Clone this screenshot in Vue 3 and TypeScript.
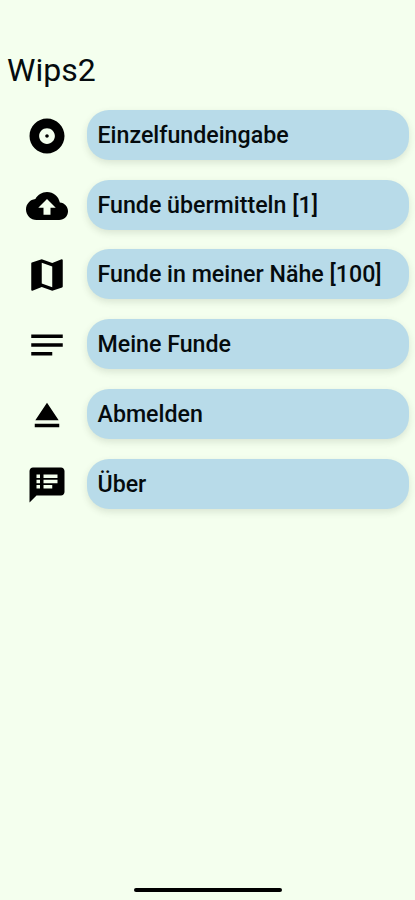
<script setup lang="ts">
interface MenuItem {
  label: string
  icon: string
}

const items: MenuItem[] = [
  {
    label: 'Einzelfundeingabe',
    icon: 'M12 2C6.48 2 2 6.48 2 12s4.480 10 10 10 10-4.480 10-10S17.520 2 12 2zm0 14.500c-2.490 0-4.500-2.010-4.500-4.500S9.510 7.500 12 7.500s4.500 2.010 4.500 4.500-2.010 4.500-4.500 4.500zm0-5.500c-.55 0-1 .45-1 1s.45 1 1 1 1-.45 1-1-.45-1-1-1z',
  },
  {
    label: 'Funde übermitteln [1]',
    icon: 'M19.35 10.04C18.67 6.59 15.64 4 12 4 9.11 4 6.6 5.64 5.35 8.04 2.34 8.36 0 10.91 0 14c0 3.31 2.69 6 6 6h13c2.76 0 5-2.24 5-5 0-2.640-2.050-4.780-4.650-4.960zM14 13v4h-4v-4H7l5-5 5 5h-3z',
  },
  {
    label: 'Funde in meiner Nähe [100]',
    icon: 'M20.500 3l-.16.03L15 5.100 9 3 3.360 4.900c-.21.07-.36.25-.36.48V20.500c0 .28.22.5.5.5l.16-.03L9 18.900l6 2.100 5.640-1.900c.21-.07.36-.25.36-.48V3.500c0-.28-.22-.5-.5-.5zM15 19l-6-2.110V5l6 2.110V19z',
  },
  { label: 'Meine Funde', icon: 'M3 18h12v-2H3v2zM3 6v2h18V6H3zm0 7h18v-2H3v2z' },
  { label: 'Abmelden', icon: 'M5 17h14v2H5zm7-12L5.330 15h13.340z' },
  {
    label: 'Über',
    icon: 'M20 2H4c-1.100 0-1.990.9-1.990 2L2 22l4-4h14c1.100 0 2-.9 2-2V4c0-1.100-.9-2-2-2zM8 14H6v-2h2v2zm0-3H6V9h2v2zm0-3H6V6h2v2zm7 6h-5v-2h5v2zm3-3h-8V9h8v2zm0-3h-8V6h8v2z',
  },
]
</script>

<template>
  <main class="screen">
    <h1 class="title">Wips2</h1>
    <nav class="menu">
      <div v-for="item in items" :key="item.label" class="row">
        <svg class="icon" viewBox="0 0 24 24" aria-hidden="true">
          <path :d="item.icon" />
        </svg>
        <button class="entry" type="button">{{ item.label }}</button>
      </div>
    </nav>
    <div class="home-bar"></div>
  </main>
</template>

<style>
body {
  background: #f4ffee;
}
</style>

<style scoped>
.screen {
  box-sizing: border-box;
  display: flex;
  flex-direction: column;
  height: 900px;
  padding: 50px 6px 8px 7px;
  background: #f4ffee;
  font-family: Roboto, sans-serif;
  color: #050b0e;
}

.title {
  margin: 0;
  height: 59.7px;
  font-size: 32px;
  line-height: 40px;
  font-weight: 400;
}

.menu {
  display: flex;
  flex-direction: column;
  gap: 19.85px;
}

.row {
  display: flex;
  align-items: center;
  height: 50px;
}

.icon {
  flex: none;
  width: 42px;
  height: 42px;
  margin: 2px 19px 0;
  fill: #000;
}

.entry {
  box-sizing: border-box;
  flex: 1;
  height: 50px;
  padding: 0 0 0 10.5px;
  border: 0;
  border-radius: 22px;
  background: #b8dbe9;
  box-shadow: 0 3px 7px rgba(60, 70, 50, 0.14);
  font: 500 23.2px/50px Roboto, sans-serif;
  color: #050b0e;
  text-align: left;
  white-space: nowrap;
}

.home-bar {
  width: 148px;
  height: 4px;
  margin: auto auto 0;
  border-radius: 2px;
  background: #000;
}
</style>
